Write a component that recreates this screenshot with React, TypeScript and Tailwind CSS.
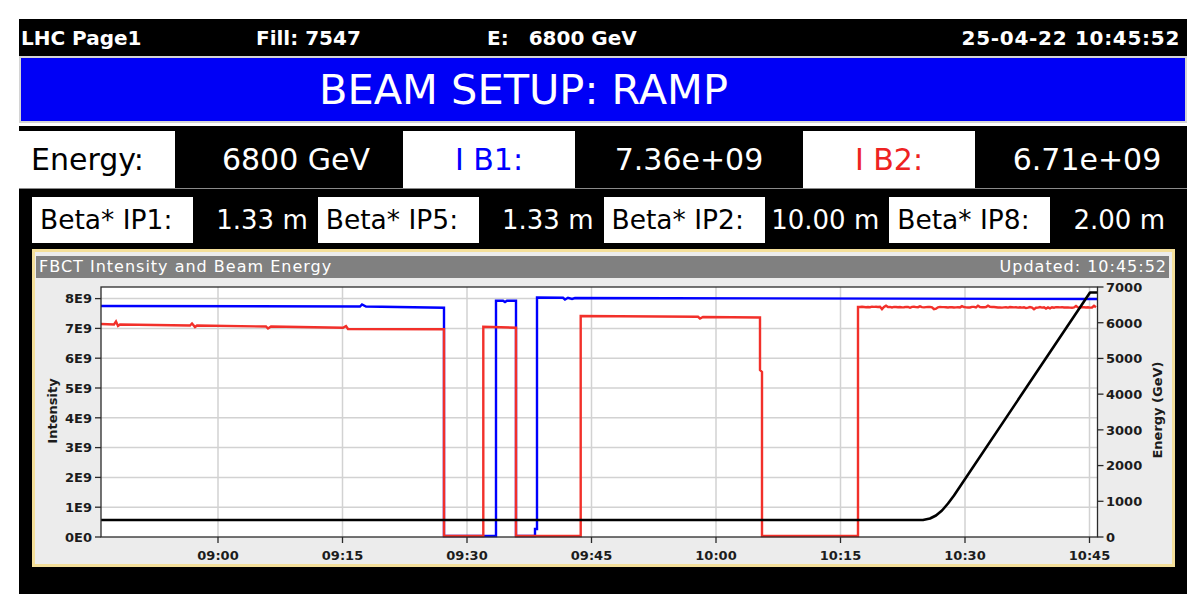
import React from "react";

const X = (m: number) => 218 + m * 8.3; // minutes after 09:00
const YI = (v: number) => 537 - v * 29.8; // intensity in E9
const YE = (e: number) => 537 - e * 0.035714; // energy GeV

function makeRng(seed: number) {
  let s = seed;
  return () => {
    s = (s * 9301 + 49297) % 233280;
    return s / 233280;
  };
}

function noisy(x0: number, x1: number, y0: number, y1: number, amp: number, seed: number, step = 2, spikeP = 0.85) {
  const rnd = makeRng(seed);
  const pts: string[] = [];
  for (let x = x0; x <= x1; x += step) {
    const base = y0 + ((y1 - y0) * (x - x0)) / (x1 - x0);
    const r = rnd();
    const dy = r > spikeP ? (rnd() - 0.5) * amp * 2 : (rnd() - 0.5) * amp * 0.3;
    pts.push(`L${x},${(base + dy).toFixed(1)}`);
  }
  return pts.join(" ");
}

const bluePath = [
  `M101,306 L360,306.5 L362,304.5 L366,306.5 L444,307.7`,
  `L444,536 L496,536 L496,300.7 L503,300.7 L505,302 L507,300.7 L516,300.7 L516,536 L535,536 L535,529 L537,529 L537,297.5`,
  `L563,297.8 L565,299.5 L568,297.8 L572,299 L575,298 L1097,299`,
].join(" ");

const redPath = [
  `M101,324 L114,324.5 L116,321.5 L118,326 L120,324.5 L190,325.5 L192,323.5 L195,327 L197,325.5 L266,326.5 L268,328.5 L271,326.5 L343,327.8 L346,326 L348,329 L444,329.3`,
  `L444,536 L483.3,536 L483.3,326.7 L516,327.7 L516,536 L580.7,536 L580.7,316`,
  `L698,316.8 L700,318.5 L703,317 L760,317.5 L760,370 L762,372 L762,536 L858,536 L858,307`,
  noisy(860, 1097, 307, 307.5, 2.2, 7, 2, 0.75),
].join(" ");

const energyPath = `M101,520 L923,520 L930,518.5 L936,515.5 L942,510.5 L948,503.5 L954,495.5 L1090,292.5 L1097,292.5`;

const xTicks = [
  { m: 0, l: "09:00" },
  { m: 15, l: "09:15" },
  { m: 30, l: "09:30" },
  { m: 45, l: "09:45" },
  { m: 60, l: "10:00" },
  { m: 75, l: "10:15" },
  { m: 90, l: "10:30" },
  { m: 105, l: "10:45" },
];

function Chart() {
  const lTicks = [0, 1, 2, 3, 4, 5, 6, 7, 8];
  const rTicks = [0, 1000, 2000, 3000, 4000, 5000, 6000, 7000];
  return (
    <svg width={1133} height={286} viewBox="0 0 1133 286" className="block">
      <g transform="translate(-36 -278)" fontFamily="DejaVu Sans, sans-serif">
        <rect x={101} y={287} width={996.5} height={250} fill="#ffffff" />
        {lTicks.slice(1).map((v) => (
          <line key={"gh" + v} x1={101} x2={1097.5} y1={YI(v)} y2={YI(v)} stroke="#d2d2d2" strokeWidth={1.5} />
        ))}
        {xTicks.map((t) => (
          <line key={"gv" + t.m} x1={X(t.m)} x2={X(t.m)} y1={287} y2={537} stroke="#d2d2d2" strokeWidth={1.5} />
        ))}
        <path d={bluePath} fill="none" stroke="#0000ff" strokeWidth={2.4} strokeLinejoin="miter" />
        <path d={redPath} fill="none" stroke="#f2302a" strokeWidth={2.4} strokeLinejoin="miter" />
        <path d={energyPath} fill="none" stroke="#000000" strokeWidth={2.6} strokeLinejoin="round" />
        <rect x={101} y={287} width={996.5} height={250} fill="none" stroke="#2a2a2a" strokeWidth={1.3} />
        {lTicks.map((v) => (
          <g key={"lt" + v}>
            <line x1={95} x2={101} y1={YI(v)} y2={YI(v)} stroke="#2a2a2a" strokeWidth={1.3} />
            <text x={92} y={YI(v) + 4.8} textAnchor="end" fontSize={13} fontWeight="bold" fill="#1c1c1c">
              {v}E{v === 0 ? 0 : 9}
            </text>
          </g>
        ))}
        {rTicks.map((e) => (
          <g key={"rt" + e}>
            <line x1={1097.5} x2={1103.5} y1={YE(e)} y2={YE(e)} stroke="#2a2a2a" strokeWidth={1.3} />
            <text x={1106} y={YE(e) + 4.8} textAnchor="start" fontSize={13} fontWeight="bold" fill="#1c1c1c">
              {e}
            </text>
          </g>
        ))}
        {xTicks.map((t) => (
          <g key={"xt" + t.m}>
            <line x1={X(t.m)} x2={X(t.m)} y1={537} y2={543} stroke="#2a2a2a" strokeWidth={1.3} />
            <text x={X(t.m)} y={559.5} textAnchor="middle" fontSize={13} fontWeight="bold" fill="#1c1c1c">
              {t.l}
            </text>
          </g>
        ))}
        <text
          transform="translate(56.5 411) rotate(-90)"
          textAnchor="middle"
          fontSize={13}
          fontWeight="bold"
          fill="#1c1c1c"
        >
          Intensity
        </text>
        <text
          transform="translate(1162 410) rotate(-90)"
          textAnchor="middle"
          fontSize={13}
          fontWeight="bold"
          fill="#1c1c1c"
        >
          Energy (GeV)
        </text>
      </g>
    </svg>
  );
}

function BetaGroup({ label, value }: { label: string; value: string }) {
  return (
    <div className="flex w-[286px] items-center">
      <div className="flex h-[46px] w-[161px] items-center bg-white pl-[8px] text-[26.5px] text-black leading-none">
        {label}
      </div>
      <div className="flex-1 pr-[10px] text-right text-[26px] leading-none text-white">{value}</div>
    </div>
  );
}

export default function App() {
  return (
    <div className="h-[594px] w-[1200px] overflow-hidden bg-white pl-[19px] pt-[19px] font-['DejaVu_Sans',sans-serif]">
      <div className="flex h-[575px] w-[1168px] flex-col">
        {/* top bar */}
        <div className="flex h-[37px] items-center bg-black text-[20px] font-bold leading-none text-white">
          <span className="w-[237px] pl-[2px]">LHC Page1</span>
          <span className="w-[231px]">Fill: 7547</span>
          <span>E:</span>
          <span className="ml-[20px]">6800 GeV</span>
          <span className="ml-auto pr-[7px] tracking-[0.7px]">25-04-22 10:45:52</span>
        </div>
        {/* title */}
        <div className="h-[67px] border-2 border-[#d4d4d4] bg-white">
          <div className="flex h-full items-center bg-[#0000f6] pl-[298px] text-[41.5px] leading-none text-white">
            BEAM SETUP: RAMP
          </div>
        </div>
        <div className="mt-[3px] h-[5px] bg-black" />
        {/* energy row */}
        <div className="flex h-[58px] items-stretch border-b border-[#8a8a8a] bg-white text-[30px] leading-none">
          <div className="flex w-[156px] items-center pl-[12px] text-black">Energy:</div>
          <div className="flex w-[228px] items-center justify-center bg-black pl-[14px] text-white">6800 GeV</div>
          <div className="flex w-[172px] items-center justify-center text-[#0000ff]">I B1:</div>
          <div className="flex w-[228px] items-center justify-center bg-black text-white">7.36e+09</div>
          <div className="flex w-[172px] items-center justify-center text-[#ee2222]">I B2:</div>
          <div className="flex flex-1 items-center justify-center bg-black pl-[12px] text-white">6.71e+09</div>
        </div>
        {/* lower section */}
        <div className="flex flex-1 flex-col bg-black pl-[13px] pr-[12px] pt-[8px]">
          <div className="flex">
            <BetaGroup label="Beta* IP1:" value="1.33 m" />
            <BetaGroup label="Beta* IP5:" value="1.33 m" />
            <BetaGroup label="Beta* IP2:" value="10.00 m" />
            <BetaGroup label="Beta* IP8:" value="2.00 m" />
          </div>
          <div className="mt-[6px] border-[3px] border-[#f4df9a] bg-[#ececec] pb-0 pl-[1px] pr-[3px] pt-[4px]">
            <div className="flex h-[22px] items-center justify-between bg-[#808080] pl-[3px] pr-[2px] text-[16px] leading-none tracking-[1px] text-white">
              <span>FBCT Intensity and Beam Energy</span>
              <span>Updated: 10:45:52</span>
            </div>
            <Chart />
          </div>
        </div>
      </div>
    </div>
  );
}
